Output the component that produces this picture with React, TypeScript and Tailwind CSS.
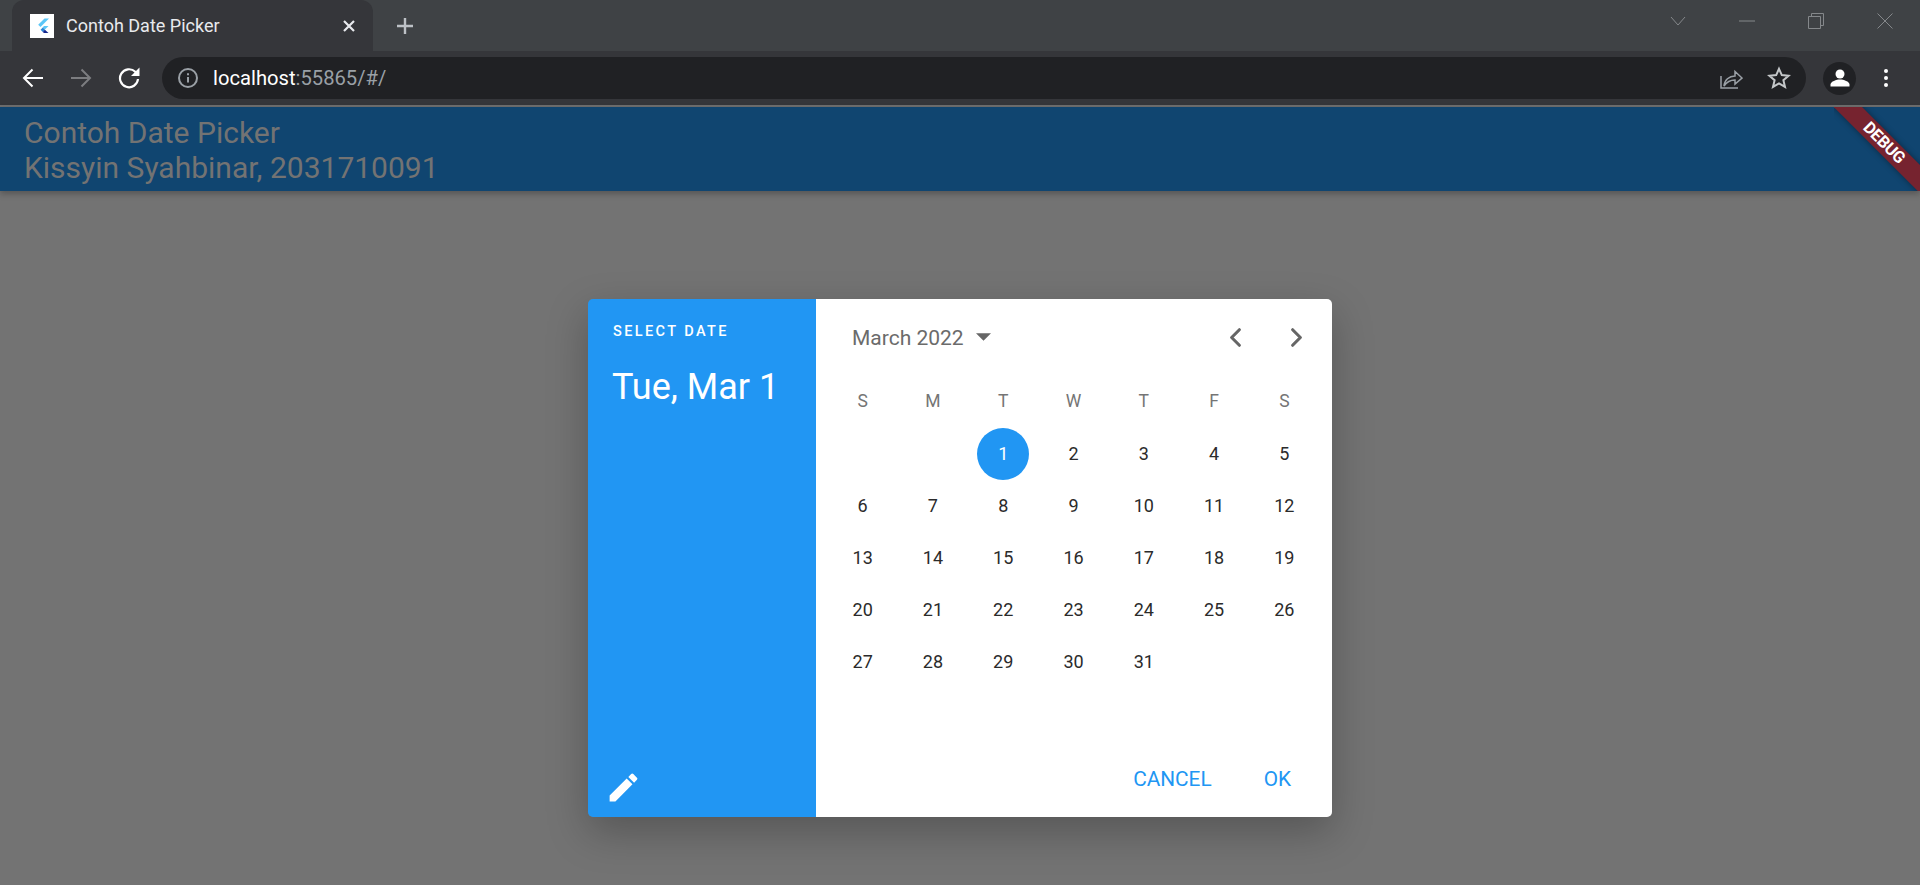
import { ChevronLeft, ChevronRight } from 'lucide-react';

const WEEKDAYS = ['S', 'M', 'T', 'W', 'T', 'F', 'S'];
const roboto = { fontFamily: 'Roboto, sans-serif' };
const blanks = [0, 1];
const days = Array.from({ length: 31 }, (_, i) => i + 1);

function FlutterFavicon() {
  return (
    <div className="w-6 h-6 bg-white shrink-0 flex items-center justify-center">
      <svg width="24" height="24" viewBox="0 0 24 24">
        <path d="M14.5 4.500h4.500l-8.500 8.500-2.300-2.300z" fill="#5cc6f7" />
        <path d="M14 12h4.500l-3.600 3.600-2.300-2.200z" fill="#5cc6f7" />
        <path d="M10.600 15.800l2.200-2.300 2.200 2.200-2.200 2.200z" fill="#2a86d6" />
        <path d="M12.700 17.900l2.200-2.200 3.600 3.300H14z" fill="#14278f" />
      </svg>
    </div>
  );
}

function TabStrip() {
  return (
    <div className="h-[51px] bg-[#3f4245] flex items-end shrink-0 relative">
      <div className="ml-3 w-[361px] h-[51px] bg-[#35363a] rounded-t-xl flex items-center pl-[18px] pr-[17px]">
        <FlutterFavicon />
        <span className="ml-3 text-[#e8eaed] text-[18px]" style={roboto}>
          Contoh Date Picker
        </span>
        <svg className="ml-auto" width="14" height="14" viewBox="0 0 14 14" stroke="#e8eaed" strokeWidth="2.2">
          <path d="M2 2l10 10M12 2L2 12" />
        </svg>
      </div>
      <div className="h-[51px] flex items-center ml-[22px]">
        <svg width="20" height="20" viewBox="0 0 20 20" stroke="#bdc1c6" strokeWidth="2.4">
          <path d="M10 2v16M2 10h16" />
        </svg>
      </div>
      <div className="ml-auto h-[42px] self-start flex items-center pr-[27px] gap-[53px]">
        <svg width="16" height="10" viewBox="0 0 16 10" fill="none" stroke="#85888b" strokeWidth="1">
          <path d="M1 1l7 8 7-8" />
        </svg>
        <svg width="16" height="2" viewBox="0 0 16 2" stroke="#85888b" strokeWidth="1">
          <path d="M0 1h16" />
        </svg>
        <svg width="16" height="16" viewBox="0 0 16 16" fill="none" stroke="#85888b" strokeWidth="1">
          <path d="M.5 3.500h12v12H.5zM3.500 3.500V.5h12v12h-3" />
        </svg>
        <svg width="16" height="16" viewBox="0 0 16 16" stroke="#85888b" strokeWidth="1">
          <path d="M.5.5l15 15M15.500.5l-15 15" />
        </svg>
      </div>
    </div>
  );
}

function Toolbar() {
  return (
    <div className="h-[54px] bg-[#35363a] flex items-center shrink-0">
      <div className="w-[162px] flex items-center pl-[22px] gap-[26px] shrink-0">
        <svg width="22" height="22" viewBox="0 0 22 22" fill="none" stroke="#fff" strokeWidth="2">
          <path d="M21 11H2.500M10.500 2.500L2 11l8.500 8.500" />
        </svg>
        <svg width="22" height="22" viewBox="0 0 22 22" fill="none" stroke="#7c7d80" strokeWidth="2">
          <path d="M1 11h18.500M11.500 2.500L20 11l-8.500 8.500" />
        </svg>
        <svg width="22" height="22" viewBox="0 0 22 22" fill="none" stroke="#fff" strokeWidth="2.200">
          <path d="M20 12a9 9 0 1 1-2.700-7.200l1.700 1.900" />
          <path d="M21.500 .5v8.500H13" fill="#fff" stroke="none" />
        </svg>
      </div>
      <div className="w-[1644px] h-[42px] bg-[#202124] rounded-full flex items-center pl-4 pr-[15px] shrink-0">
        <svg width="20" height="20" viewBox="0 0 20 20" fill="none" stroke="#9aa0a6" strokeWidth="2">
          <circle cx="10" cy="10" r="9" />
          <path d="M10 9v5.500M10 5.200v2" />
        </svg>
        <span className="ml-[15px] text-[20.200px]" style={roboto}>
          <span className="text-white">localhost</span>
          <span className="text-[#9aa0a6]">:55865/#/</span>
        </span>
        <svg className="ml-auto" width="24" height="24" viewBox="0 0 24 24" fill="none" stroke="#9aa0a6" strokeWidth="1.500">
          <path d="M2 10v12h17" />
          <path d="M5 20c.5-6 5-10 11-10V5.500l7 6.500-7 6v-4c-4 0-8 1.500-11 6z" />
        </svg>
        <svg className="ml-6" width="24" height="24" viewBox="0 0 24 24" fill="none" stroke="#c4c7c9" strokeWidth="2">
          <path d="M12 2.800l2.800 6.300 6.800.6-5.200 4.500 1.600 6.700L12 17.300l-6 3.600 1.600-6.700-5.200-4.500 6.800-.6z" />
        </svg>
      </div>
      <div className="ml-[17px] w-[33px] h-[33px] rounded-full bg-[#202124] flex items-center justify-center shrink-0">
        <svg width="22" height="22" viewBox="0 0 22 22" fill="#fff">
          <circle cx="11" cy="7" r="4.500" />
          <path d="M1.500 19.500v-2c0-3 6-5 9.500-5s9.500 2 9.500 5v2z" />
        </svg>
      </div>
      <div className="ml-[28px] flex flex-col gap-[3px] shrink-0">
        <div className="w-1 h-1 rounded-full bg-white" />
        <div className="w-1 h-1 rounded-full bg-white" />
        <div className="w-1 h-1 rounded-full bg-white" />
      </div>
    </div>
  );
}

function DebugBanner() {
  return (
    <div className="absolute top-0 right-0 w-[86px] h-[84px] overflow-hidden">
      <div className="absolute left-[-22px] top-[25px] w-[142px] h-[19.500px] rotate-45 bg-[#76232f] shadow-[0_0_6px_rgba(0,0,0,0.4)] flex items-center justify-center pl-[3px]">
        <span className="text-white text-[16.500px] font-bold tracking-[-0.3px]" style={roboto}>
          DEBUG
        </span>
      </div>
    </div>
  );
}

function DatePicker() {
  return (
    <div
      className="w-[744px] h-[518.500px] flex rounded-[5px] overflow-hidden shadow-[0_15px_40px_rgba(0,0,0,0.25)]"
      style={roboto}
    >
      <div className="w-[228px] bg-[#2196f3] flex flex-col text-white shrink-0 pl-[25px]">
        <div className="mt-[25px] text-[14.500px] font-medium tracking-[2.400px] leading-[16px]">SELECT DATE</div>
        <div className="mt-[24px] -ml-[1px] text-[36px] leading-[46px]">Tue, Mar 1</div>
        <svg className="mt-auto mb-[11px] -ml-[8px]" width="37" height="37" viewBox="0 0 24 24" fill="#fff">
          <path d="M3 17.250V21h3.750L17.810 9.940l-3.750-3.750L3 17.250zM20.710 7.040a1 1 0 0 0 0-1.410l-2.340-2.340a1 1 0 0 0-1.410 0l-1.830 1.830 3.750 3.750 1.830-1.830z" />
        </svg>
      </div>
      <div className="flex-1 bg-white flex flex-col pl-[11.500px] pr-[12px]">
        <div className="h-[77px] flex items-center shrink-0 pl-[24.500px]">
          <span className="text-[#6b6b6b] text-[21px] relative top-[2px]">March 2022</span>
          <svg className="ml-[12px]" width="15" height="8" viewBox="0 0 14 7" fill="#666666">
            <path d="M0 0h14L7 7z" />
          </svg>
          <ChevronLeft className="ml-auto text-[#666666]" size={31} strokeWidth={2.4} />
          <ChevronRight className="ml-[30px] mr-[8px] text-[#666666]" size={31} strokeWidth={2.400} />
        </div>
        <div className="grid grid-cols-7 w-[492px] auto-rows-[52px] text-[18px] text-[#2b2b2b]">
          {WEEKDAYS.map((d, i) => (
            <div key={i} className="flex items-center justify-center text-[#757575] text-[17.500px]">
              {d}
            </div>
          ))}
          {blanks.map((b) => (
            <div key={`b${b}`} />
          ))}
          {days.map((d) => (
            <div key={d} className="flex items-center justify-center">
              {d === 1 ? (
                <div className="w-[52px] h-[52px] rounded-full bg-[#2196f3] text-white flex items-center justify-center">
                  {d}
                </div>
              ) : (
                d
              )}
            </div>
          ))}
        </div>
        <div className="mt-auto mb-[22px] flex justify-end items-center gap-[52px] pr-[29px] text-[#2196f3] text-[20.800px]">
          <span>CANCEL</span>
          <span>OK</span>
        </div>
      </div>
    </div>
  );
}

export default function App() {
  return (
    <div className="w-[1920px] h-[885px] flex flex-col overflow-hidden bg-[#737373]">
      <TabStrip />
      <Toolbar />
      <div className="h-[2px] bg-[#6e6e6e] shrink-0" />
      <div className="h-[84px] bg-[#104570] relative shrink-0 pl-6 shadow-[0_3px_6px_rgba(0,0,0,0.25)] pt-[8px] text-[#737373] text-[30px] leading-[35px]" style={roboto}>
        <div>Contoh Date Picker</div>
        <div>Kissyin Syahbinar, 2031710091</div>
        <DebugBanner />
      </div>
      <div className="flex-1 flex justify-center pt-[107.500px]">
        <DatePicker />
      </div>
    </div>
  );
}
